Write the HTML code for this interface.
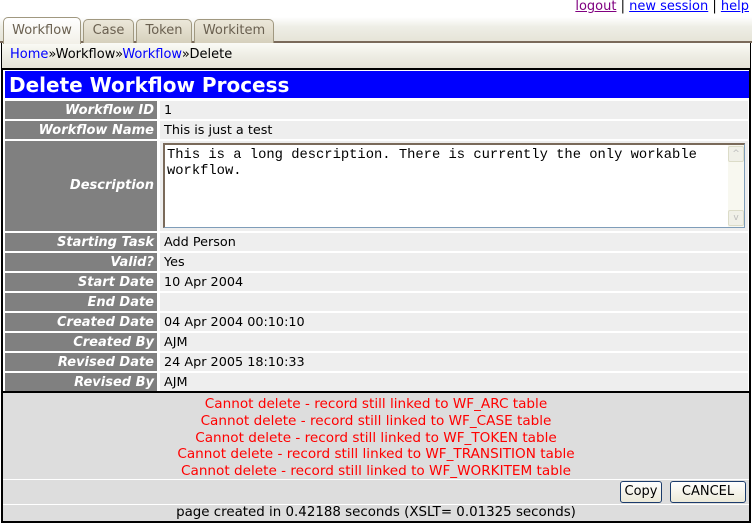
<!DOCTYPE html>
<html><head><meta charset="utf-8"><style>
*{margin:0;padding:0;box-sizing:border-box}
body{width:752px;height:524px;background:#fff;font-family:"DejaVu Sans","Liberation Sans",sans-serif;font-size:12.5px;position:relative;overflow:hidden;color:#000}
.a{position:absolute}
#top{right:3px;top:-1px;font-size:13px}
#top a{text-decoration:underline}
#tabbar{left:0;top:17px;width:752px;height:26px;background:linear-gradient(#fff,#eeeee6 40%,#e6e4d8);border-bottom:2px solid #7a6a5a}
.tab{top:19px;height:24px;border:1px solid #a09880;border-bottom:none;border-radius:5px 5px 0 0;background:linear-gradient(#ece8da,#d6d0bc);color:#6a6050;font-size:13px;text-align:center;line-height:22px}
#crumb{left:1px;top:43px;width:750px;height:26px;background:linear-gradient(#fbfbf6,#eeede4 50%,#e4e2d8);border-right:1px solid #000;border-bottom:1px solid #000;border-left:1px solid #000;padding:4px 0 0 8px;font-size:13px}
#crumb a{color:#00f;text-decoration:none}
#box{left:1px;top:69px;width:750px;height:454px;border:2px solid #000;border-top:1px solid #000;background:#fff}
#title{left:5px;top:71px;width:744px;height:27px;background:#00f;color:#fff;font-weight:bold;font-size:20px;line-height:29px;padding-left:4px}
.l{left:5px;width:152px;background:#808080;color:#fff;font-style:italic;font-weight:bold;text-align:right;padding-right:3px;height:18px;line-height:19px;font-size:13px}
.v{left:160px;width:588px;background:#eee;height:18px;line-height:19px;padding-left:4px;font-size:12.8px}
#msg{left:3px;top:393px;width:746px;height:128px;background:#ddd}
.m{color:#f00;text-align:center;width:746px;left:3px;font-size:13.6px}
.btn{top:481px;height:22px;border:1px solid #1c3c6c;border-radius:3px;background:linear-gradient(#fff,#ece9d8);font-size:13px;text-align:center;line-height:20px}
</style></head><body>
<div class="a" id="top"><a style="color:#800080">logout</a> | <a style="color:#00f">new session</a> | <a style="color:#00f">help</a></div>
<div class="a" id="tabbar"></div>
<div class="tab a" style="left:3px;width:78px;top:17px;height:27px;background:linear-gradient(#fff,#f2f0e8);color:#6a6050;z-index:2;line-height:26px">Workflow</div>
<div class="tab a" style="left:83px;width:51px">Case</div>
<div class="tab a" style="left:136px;width:56px">Token</div>
<div class="tab a" style="left:194px;width:80px">Workitem</div>
<div class="a" id="crumb"><a>Home</a>»Workflow»<a>Workflow</a>»Delete</div>
<div class="a" id="box"></div>
<div class="a" id="title">Delete Workflow Process</div>

<div class="a l" style="top:101px">Workflow ID</div><div class="a v" style="top:101px">1</div>
<div class="a l" style="top:121px">Workflow Name</div><div class="a v" style="top:121px">This is just a test</div>
<div class="a l" style="top:141px;height:90px;line-height:90px">Description</div><div class="a v" style="top:141px;height:90px"></div>
<div class="a" style="left:163px;top:143px;width:582px;height:85px;background:#fff;border:1px solid #7f9db9;border-top:2px solid #7a6a5a;border-left:2px solid #7a6a5a;font-family:'Liberation Mono',monospace;font-size:13.8px;line-height:16px;padding:3px 20px 0 2px">This is a long description. There is currently the only workable workflow.</div>
<div class="a" style="left:728px;top:145px;width:16px;height:82px;background:#f8f8f0"></div>
<div class="a" style="left:728px;top:146px;width:16px;height:16px;border:1px solid #dcdcc8;border-radius:2px;background:#f0f0e8;color:#bbb;font-size:9px;text-align:center;line-height:14px">^</div>
<div class="a" style="left:728px;top:210px;width:16px;height:16px;border:1px solid #dcdcc8;border-radius:2px;background:#f0f0e8;color:#bbb;font-size:9px;text-align:center;line-height:14px">v</div>
<div class="a l" style="top:233px">Starting Task</div><div class="a v" style="top:233px">Add Person</div>
<div class="a l" style="top:253px">Valid?</div><div class="a v" style="top:253px">Yes</div>
<div class="a l" style="top:273px">Start Date</div><div class="a v" style="top:273px">10 Apr 2004</div>
<div class="a l" style="top:293px">End Date</div><div class="a v" style="top:293px"></div>
<div class="a l" style="top:313px">Created Date</div><div class="a v" style="top:313px">04 Apr 2004 00:10:10</div>
<div class="a l" style="top:333px">Created By</div><div class="a v" style="top:333px">AJM</div>
<div class="a l" style="top:353px">Revised Date</div><div class="a v" style="top:353px">24 Apr 2005 18:10:33</div>
<div class="a l" style="top:373px">Revised By</div><div class="a v" style="top:373px">AJM</div>
<div class="a" style="left:3px;top:391px;width:746px;height:2px;background:#000"></div>
<div class="a" id="msg"></div>
<div class="a m" style="top:396px">Cannot delete - record still linked to WF_ARC table</div>
<div class="a m" style="top:413px">Cannot delete - record still linked to WF_CASE table</div>
<div class="a m" style="top:430px">Cannot delete - record still linked to WF_TOKEN table</div>
<div class="a m" style="top:446px">Cannot delete - record still linked to WF_TRANSITION table</div>
<div class="a m" style="top:463px">Cannot delete - record still linked to WF_WORKITEM table</div>
<div class="a" style="left:3px;top:479px;width:746px;height:1px;background:#fff"></div>
<div class="a btn" style="left:620px;width:42px">Copy</div>
<div class="a btn" style="left:670px;width:76px">CANCEL</div>
<div class="a" style="left:3px;top:504px;width:746px;height:1px;background:#fff"></div>
<div class="a" style="left:3px;top:505px;width:746px;text-align:center;font-size:13.4px">page created in 0.42188 seconds (XSLT= 0.01325 seconds)</div>
</body></html>
